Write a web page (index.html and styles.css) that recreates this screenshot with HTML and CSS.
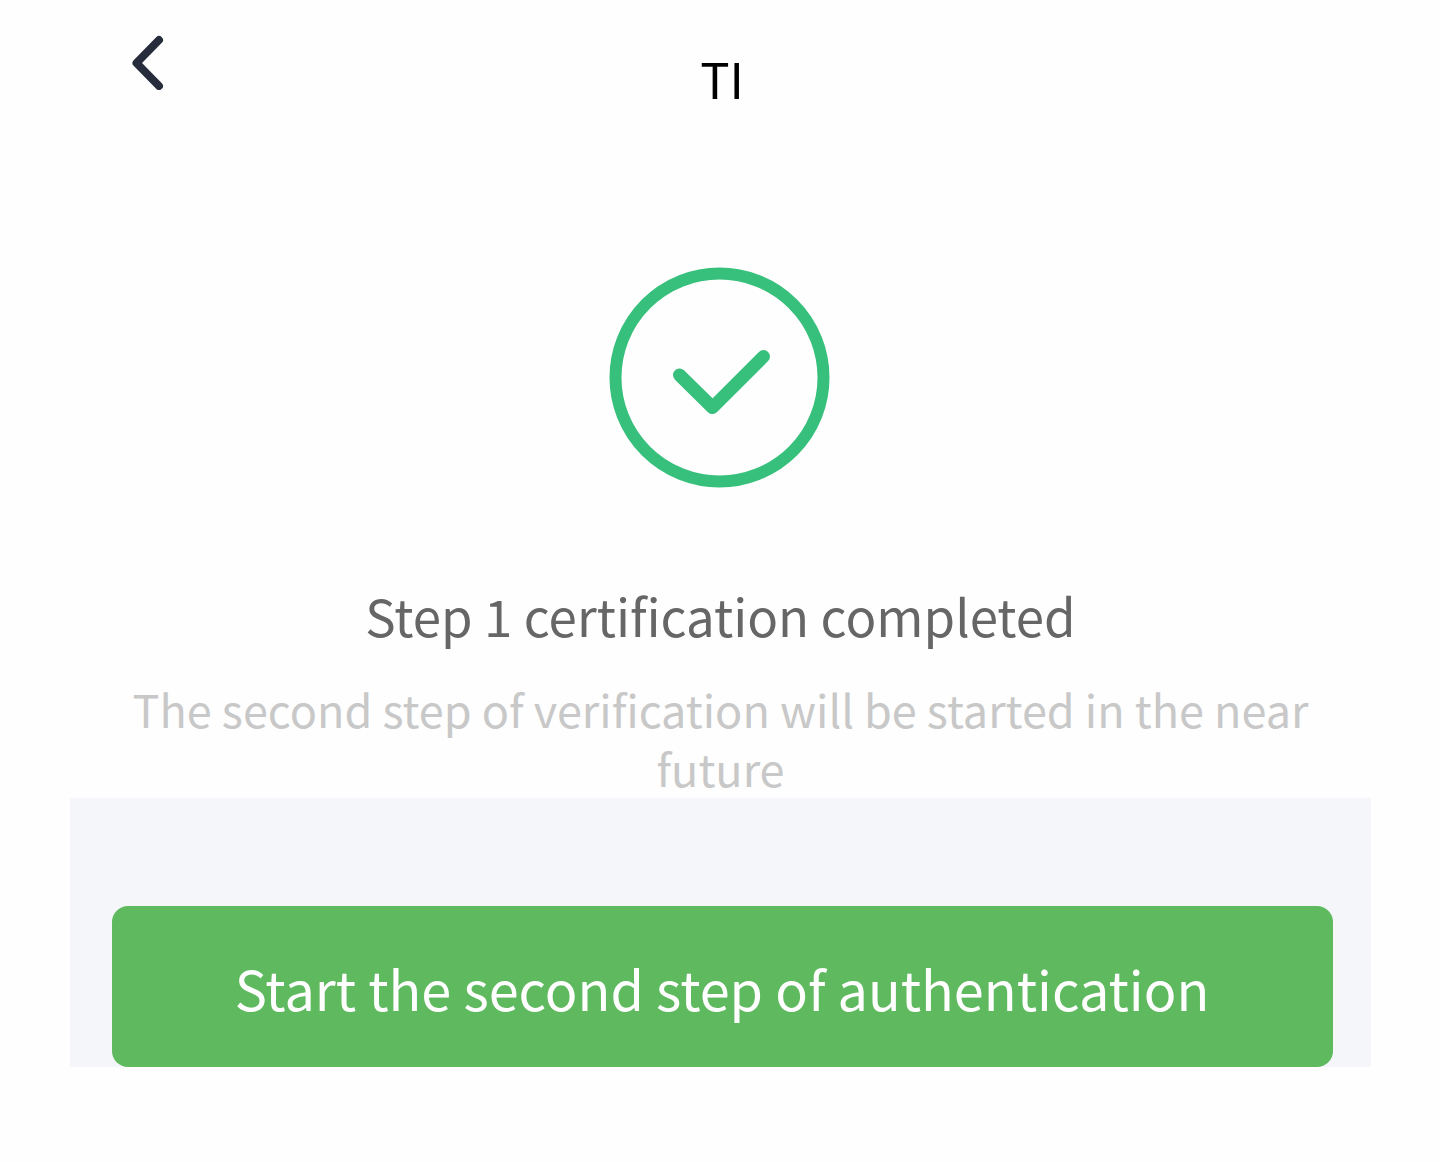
FILE: index.html
```html
<!DOCTYPE html>
<html lang="en">
<head>
    <meta charset="UTF-8">
    <meta name="viewport" content="width=device-width, initial-scale=1.0">
    <title>TI</title>
    <link rel="stylesheet" href="styles.css">
</head>
<body>
    <div class="container">
        <header class="header">
            <a class="back-btn" href="#" aria-label="Back">
                <svg width="40" height="60" viewBox="0 0 40 60" fill="none">
                    <path d="M29 10 L6.5 33 L29 56" stroke="#272c3c" stroke-width="8" stroke-linecap="round" stroke-linejoin="round"/>
                </svg>
            </a>
            <h1 class="title">TI</h1>
        </header>

        <main class="result">
            <svg class="result-icon" width="221" height="221" viewBox="0 0 221 221" fill="none" stroke="#37c07c">
                <circle cx="110.5" cy="110.5" r="104" stroke-width="12"/>
                <path d="M70.5 108 L103.5 140.5 L154.5 89.5" stroke-width="13" stroke-linecap="round" stroke-linejoin="round"/>
            </svg>
            <h2 class="result-title">Step 1 certification completed</h2>
            <p class="result-text">The second step of verification will be started in the near future</p>
        </main>

        <div class="actions">
            <button class="start-btn">Start the second step of authentication</button>
        </div>
    </div>
</body>
</html>
```
FILE: styles.css
```css
body {
    font-family: "Noto Sans CJK SC", "Noto Sans", sans-serif;
    margin: 0;
    background-color: #fefefe;
}

.container {
    width: 1301px;
    margin: 0 auto 0 70px;
}

.header {
    display: grid;
    grid-template-columns: 100px 1fr 97px;
    height: 267px;
}

.back-btn {
    padding: 30px 0 0 60px;
}

.back-btn svg {
    display: block;
}

.title {
    margin: 48px 0 0;
    color: #000;
    font-size: 49px;
    font-weight: 400;
    line-height: 60px;
    text-align: center;
}

.result {
    display: flex;
    flex-direction: column;
    align-items: center;
    height: 531px;
    text-align: center;
}

.result-icon {
    display: block;
    flex: none;
    margin-right: 2px;
}

.result-title {
    margin: 97px 0 34px;
    color: #666;
    font-size: 51px;
    font-weight: 400;
    line-height: 60px;
}

.result-text {
    margin: 0;
    padding: 0 40px;
    color: #c8c8c8;
    font-size: 45px;
    line-height: 59px;
}

.actions {
    padding: 108px 38px 0 42px;
    background-color: #f4f6fa;
}

.start-btn {
    display: block;
    width: 100%;
    height: 161px;
    padding: 1px 1px 0 0;
    border: none;
    border-radius: 16px;
    background-color: #5fb95f;
    color: #fff;
    font-family: inherit;
    font-size: 54px;
    cursor: pointer;
}
```
